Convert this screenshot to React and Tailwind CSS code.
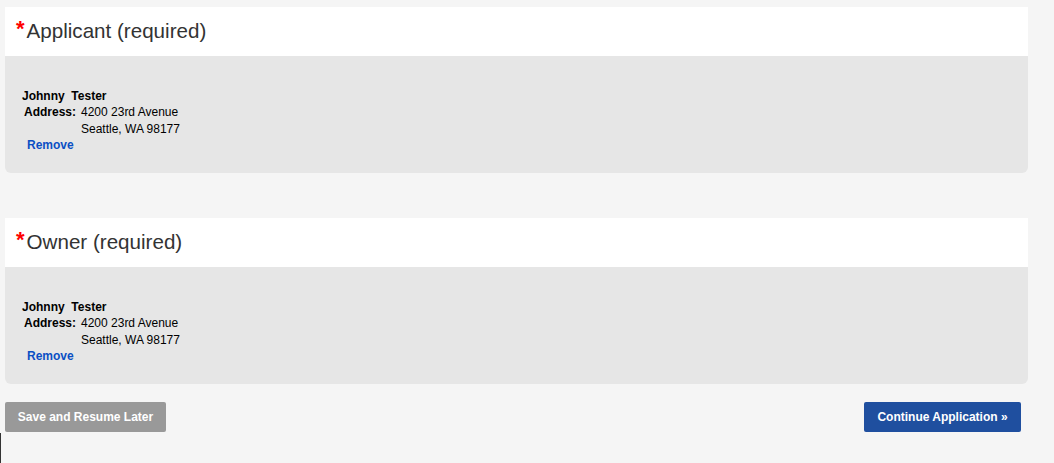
import React from 'react'

const contacts = [
    { title: 'Applicant (required)', name: ['Johnny', 'Tester'], street: '4200 23rd Avenue', city: 'Seattle, WA 98177' },
    { title: 'Owner (required)', name: ['Johnny', 'Tester'], street: '4200 23rd Avenue', city: 'Seattle, WA 98177' },
]

const ContactPanel = ({ title, name, street, city }) => {
    return (
        <div className="w-[1023px]">
            <div className="h-[49px] bg-white flex items-center pl-[11px]">
                <span className="text-[#ff0000] text-[22px] font-bold leading-none relative top-[-3px] mr-[2px]">*</span>
                <h2 className="text-[20.6px] text-[#333333] leading-none">{title}</h2>
            </div>
            <div className="bg-[#e6e6e6] rounded-b-[6px] pt-[32px] text-[12px] leading-[16px] text-black" style={{ height: 117 }}>
                <div className="pl-[17px] font-bold">
                    {name[0]}&nbsp; {name[1]}
                </div>
                <div className="flex">
                    <div className="w-[71px] text-right font-bold">Address:</div>
                    <div className="ml-[5px]">
                        <div>{street}</div>
                        <div className="mt-[1px]">{city}</div>
                    </div>
                </div>
                <a href="#" className="block ml-[22px] font-bold text-[#0b4fc4]">Remove</a>
            </div>
        </div>
    )
}

export default function App() {
    return (
        <div className="min-h-[463px] bg-[#f5f5f5] font-['Liberation_Sans',Arial,sans-serif]">
            <div className="pt-[7px] pl-[5px] flex flex-col gap-[45px]">
                {contacts.map((c, index) => (
                    <ContactPanel key={index} {...c} />
                ))}
            </div>
            <div className="flex justify-between items-center pl-[5px] pr-[33px] mt-[18px]">
                <button className="h-[30px] w-[161px] bg-[#999999] rounded-[2px] text-white text-[12px] font-bold">
                    Save and Resume Later
                </button>
                <button className="h-[30px] w-[157px] bg-[#1f4f9f] rounded-[2px] text-white text-[12px] font-bold">
                    Continue Application »
                </button>
            </div>
            <div className="w-[1px] h-[31px] bg-[#333333] mt-[1px]"></div>
        </div>
    )
}
